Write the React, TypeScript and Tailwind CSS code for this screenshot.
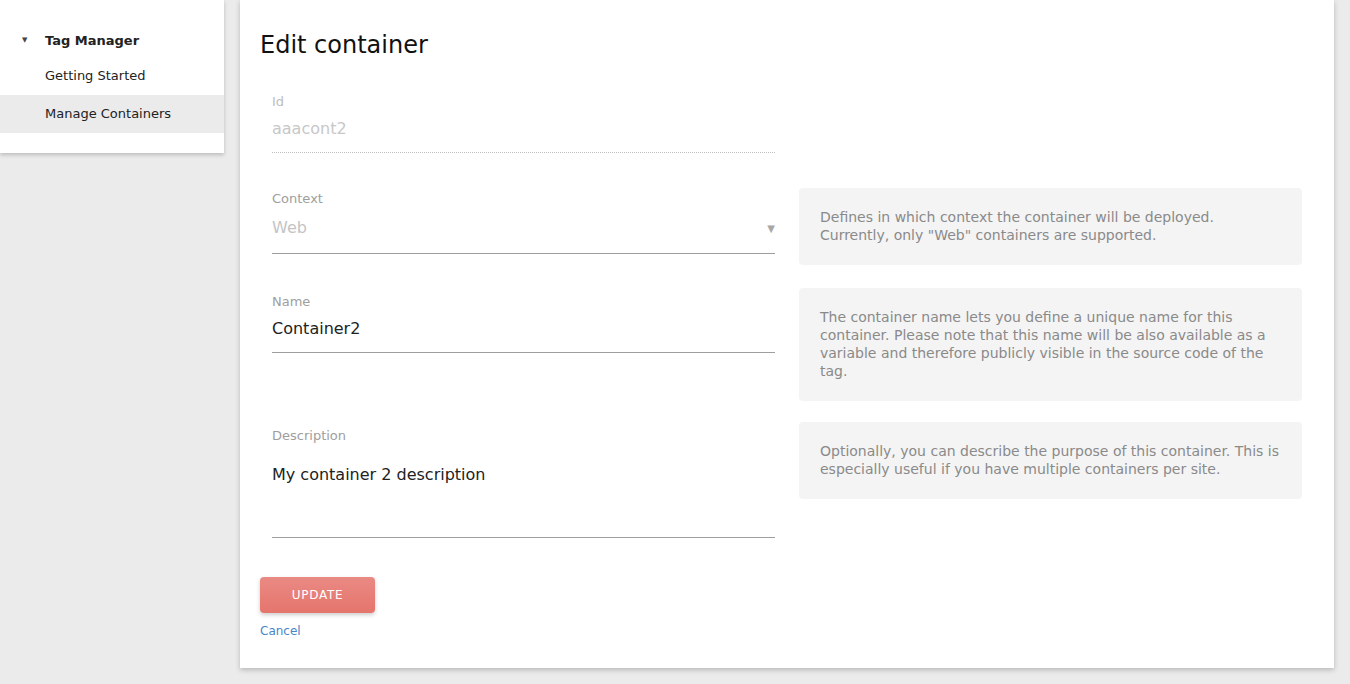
const font = { fontFamily: '"DejaVu Sans", Verdana, sans-serif' };

function HelpBox({ children }: { children: React.ReactNode }) {
  return (
    <div className="w-[503px] bg-[#f4f4f4] rounded-sm px-[21px] pt-5 pb-[21px] text-[14px] leading-[18px] text-[#8a8a8a]">
      {children}
    </div>
  );
}

export default function App() {
  return (
    <div className="min-h-[684px] bg-[#ebebeb] flex items-start gap-4" style={font}>
      {/* Sidebar */}
      <aside className="w-[224px] bg-white shadow-[0_2px_4px_rgba(0,0,0,0.2)] pt-[24px] pb-5 text-[13px] text-[#222]">
        <div className="h-[33px] flex items-center">
          <span className="w-[45px] pl-[22px] text-[7px] text-[#444]">▼</span>
          <span className="font-bold">Tag Manager</span>
        </div>
        <div className="h-[38px] flex items-center pl-[45px]">Getting Started</div>
        <div className="h-[38px] flex items-center pl-[45px] bg-[#ebebeb]">Manage Containers</div>
      </aside>

      {/* Card */}
      <main className="w-[1094px] bg-white shadow-[0_2px_5px_rgba(0,0,0,0.22)] px-5 pt-[29px] pb-[29px]">
        <h1 className="text-[24px] leading-8 text-[#111]">Edit container</h1>

        {/* Id */}
        <div className="mt-[33px] flex gap-6 px-3">
          <div className="w-[503px]">
            <div className="text-[13px] leading-4 text-[#bdbdbd]">Id</div>
            <div className="mt-[7px] text-[16px] leading-6 pb-[11px] text-[#c8c8c8] border-b border-dotted border-[#bdbdbd]">
              aaacont2
            </div>
          </div>
        </div>

        {/* Context */}
        <div className="mt-[35px] flex gap-6 px-3 items-start">
          <div className="w-[503px] pt-[3px]">
            <div className="text-[13px] leading-4 text-[#9e9e9e]">Context</div>
            <div className="mt-[9px] text-[16px] leading-6 pb-[12px] text-[#c4c4c4] border-b border-[#9e9e9e] flex justify-between">
              <span>Web</span>
              <span className="text-[10px] text-[#a8a8a8] pt-[1px]">▼</span>
            </div>
          </div>
          <HelpBox>
            Defines in which context the container will be deployed.
            <br />
            Currently, only "Web" containers are supported.
          </HelpBox>
        </div>

        {/* Name */}
        <div className="mt-[23px] flex gap-6 px-3 items-start">
          <div className="w-[503px] pt-[6px]">
            <div className="text-[13px] leading-4 text-[#9e9e9e]">Name</div>
            <div className="mt-[7px] text-[16px] leading-6 pb-[11px] text-[#222] border-b border-[#9e9e9e]">Container2</div>
          </div>
          <HelpBox>
            The container name lets you define a unique name for this container. Please note that this name will be also
            available as a variable and therefore publicly visible in the source code of the tag.
          </HelpBox>
        </div>

        {/* Description */}
        <div className="mt-[21px] flex gap-6 px-3 items-start">
          <div className="w-[503px] pt-[6px]">
            <div className="text-[13px] leading-4 text-[#9e9e9e]">Description</div>
            <div className="mt-[19px] text-[16px] leading-6 pb-[50px] text-[#222] border-b border-[#9e9e9e]">
              My container 2 description
            </div>
          </div>
          <HelpBox>
            Optionally, you can describe the purpose of this container. This is especially useful if you have multiple
            containers per site.
          </HelpBox>
        </div>

        {/* Actions */}
        <button className="mt-[39px] w-[115px] h-9 rounded-sm bg-gradient-to-b from-[#e98a83] to-[#e5756d] text-white text-[12px] tracking-[0.06em] shadow-[0_2px_4px_rgba(0,0,0,0.2)]">
          UPDATE
        </button>
        <div className="mt-[10px] text-[12px] leading-4 text-[#4a86c8]">Cancel</div>
      </main>
    </div>
  );
}
